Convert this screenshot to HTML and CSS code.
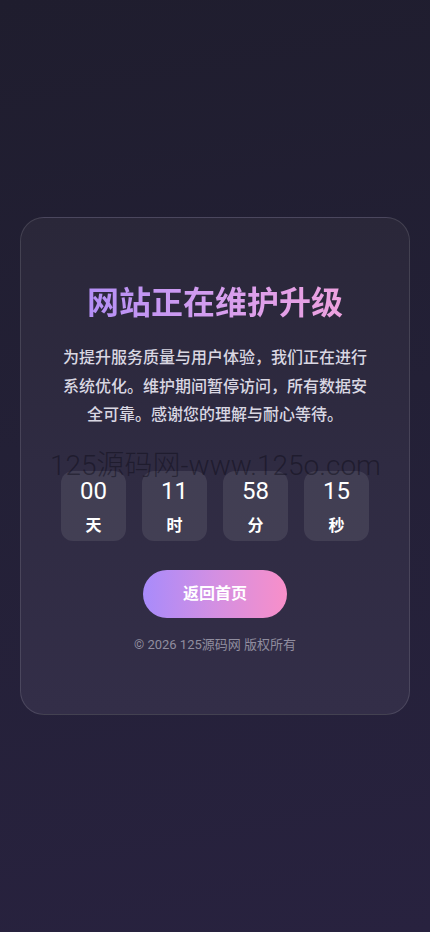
FILE: index.html
```html
<!DOCTYPE html>
<html lang="zh-CN">
<head>
  <meta charset="UTF-8">
  <meta name="viewport" content="width=device-width, initial-scale=1.0">
  <title>网站维护中</title>
  <link rel="stylesheet" href="styles.css">
</head>
<body>
  <div class="page">
    <div class="card">
      <h1 class="title">网站正在维护升级</h1>
      <p class="desc">为提升服务质量与用户体验，我们正在进行系统优化。维护期间暂停访问，所有数据安全可靠。感谢您的理解与耐心等待。</p>

      <div class="countdown">
        <div class="unit"><span class="num">00</span><span class="label">天</span></div>
        <div class="unit"><span class="num">11</span><span class="label">时</span></div>
        <div class="unit"><span class="num">58</span><span class="label">分</span></div>
        <div class="unit"><span class="num">15</span><span class="label">秒</span></div>
      </div>

      <a class="home-btn" href="#">返回首页</a>
      <p class="copyright">© 2026 125源码网 版权所有</p>

      <div class="watermark">125源码网-www.125o.com</div>
    </div>
  </div>
</body>
</html>
```

FILE: styles.css
```css
* {
  box-sizing: border-box;
}
html, body {
  margin: 0;
  padding: 0;
}
body {
  font-family: Roboto, "Noto Sans CJK SC", sans-serif;
  color: #ffffff;
  background: linear-gradient(170deg, #1f1d2e 0%, #232036 45%, #28223f 100%);
  min-height: 932px;
}
.page {
  min-height: 932px;
  padding: 217px 20px 0;
}

/* Karte */
.card {
  position: relative;
  width: 390px;
  height: 498px;
  padding: 64px 40px 0;
  border-radius: 24px;
  border: 1px solid rgba(255, 255, 255, 0.12);
  background: linear-gradient(180deg, #2a2739 0%, #2f2b42 50%, #332e48 100%);
  text-align: center;
}
.title {
  margin: 0;
  font-size: 32px;
  line-height: 42px;
  font-weight: 700;
  background: linear-gradient(90deg, #ad8cf7 0%, #d59eef 50%, #f3a2dc 100%);
  -webkit-background-clip: text;
  background-clip: text;
  color: transparent;
}
.desc {
  margin: 20px 0 0;
  font-size: 16px;
  line-height: 28.6px;
  font-weight: 500;
  color: #d9d7e2;
}

/* Countdown */
.countdown {
  display: grid;
  grid-template-columns: repeat(4, 65px);
  justify-content: center;
  gap: 16px;
  margin-top: 41px;
}
.unit {
  display: flex;
  flex-direction: column;
  align-items: center;
  height: 70px;
  padding-top: 6px;
  border-radius: 12px;
  background: rgba(255, 255, 255, 0.09);
}
.num {
  font-size: 24px;
  line-height: 28px;
  font-weight: 400;
}
.label {
  margin-top: 9px;
  font-size: 16px;
  line-height: 24px;
  font-weight: 700;
}

/* Button */
.home-btn {
  display: inline-block;
  margin-top: 29px;
  width: 144px;
  height: 48px;
  line-height: 48px;
  border-radius: 24px;
  background: linear-gradient(90deg, #a88bfb 0%, #d38fe2 50%, #f88fc9 100%);
  color: #ffffff;
  font-size: 16px;
  font-weight: 700;
  text-decoration: none;
}
.copyright {
  margin: 17px 0 0;
  font-size: 13px;
  line-height: 20px;
  color: #908d9f;
}

/* Wasserzeichen */
.watermark {
  position: absolute;
  left: 29px;
  top: 231px;
  width: 330px;
  font-size: 28px;
  font-weight: 300;
  line-height: 34px;
  text-align: left;
  color: rgba(12, 10, 22, 0.45);
  white-space: nowrap;
  pointer-events: none;
}
```
